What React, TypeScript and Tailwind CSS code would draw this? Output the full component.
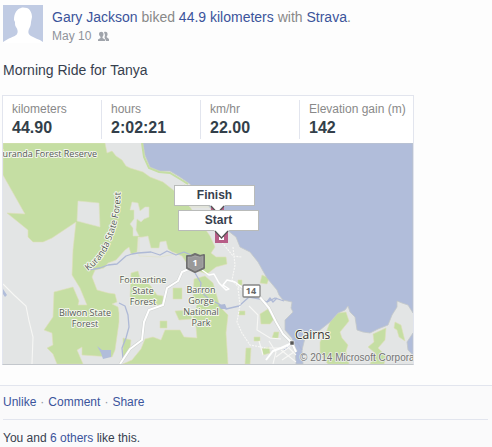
import React from "react";

const link = "text-[#3b549b] hover:underline";

const stats = [
  { label: "kilometers", value: "44.90" },
  { label: "hours", value: "2:02:21" },
  { label: "km/hr", value: "22.00" },
  { label: "Elevation gain (m)", value: "142" },
];

function Avatar() {
  return (
    <svg className="h-[38px] w-10 shrink-0 bg-[#c0cbe3]" viewBox="0 0 40 38" aria-label="Profile picture">
      <path
        d="M0 38V37L5 34C9 32 13 31 14 29C15 27 15 25 13 22C12 21 12 19 12 17L11 15C11 8 14 4 18 3C20 2 22 3 24 3C27 4 29 8 29 12L28 17C28 20 27 22 26 24C25 27 25 29 28 31C31 33 36 34 40 37V38Z"
        fill="#fff"
      />
    </svg>
  );
}

function FriendsIcon() {
  return (
    <svg className="h-[10px] w-[11px]" viewBox="0 0 11 10" fill="#a0a4ab" aria-label="Friends">
      <path d="M6 1C8 0 10 1 9.500 4L8.500 6L11 8V10H8L7 7.500L6.500 6.500L7 4Z" />
      <path d="M1 3C1 0 5.500 0 5.500 3C5.500 4.500 5 5 4.500 6V7L7 8.500V10H0V8.500L2.500 7V6C2 5 1 4.500 1 3Z" />
    </svg>
  );
}

function Label({ x, y, lines }: { x: number; y: number; lines: string[] }) {
  return (
    <>
      {lines.map((line, i) => (
        <text key={line} x={x} y={y + i * 11} textAnchor="middle">
          {line}
        </text>
      ))}
    </>
  );
}

function MapDrawing() {
  return (
    <svg className="block w-full" viewBox="3 143 410 221" role="img" aria-label="Route map near Cairns">
      <rect x="3" y="143" width="410" height="221" fill="#e3e5e5" />
      {/* Forest reserves */}
      <g fill="#c5dea3" stroke="#dfdfb8" strokeWidth="0.6" strokeLinejoin="round">
        <path d="M3 143H105L107 153L112 151L116 156L122 160L126 166L130 168L143 172L150 177L163 182L177 193L190 207L210 236L215 247L211 253L216 257L226 257L227 264L216 267L207 274L190 268L182 256L173 252L166 254L158 251L149 253L147 237L138 237L137 252L131 254L129 247L125 250L116 260L108 263L104 268L95 270L92 277L97 290L108 293L115 294L117 302L112 304L118 307L119 313L119 322L115 350L112 357L82 355L82 347L77 350L83 364H57L53 354L47 348L53 345L52 333L44 330L53 317L54 292L73 287L79 301L78 305L87 305L80 288L72 275L73 250L76 222L52 238L43 242L33 242L28 237V230L7 213L25 214L3 175Z" />
        <path d="M131 273L138 271L140 278L150 285L157 295L163 296V305H154L144 302L130 299Z" />
        <path d="M194 279L205 276L213 283L218 300L220 307L228 315L226 333L228 364H123L132 360L141 349L145 339L153 337L161 340L165 330L180 330L184 337L197 338L196 327L193 317L197 305L193 300Z" />
        <path d="M173 288H182V299H173Z M175 311L190 310L192 319L179 320Z M160 321H167V328H160Z M123 338L131 340L130 348L123 360Z" />
        <path d="M327 330L330 322L338 313L346 312L349 321L340 332L342 338L348 345L346 351L349 364H328L320 355L320 342Z" />
        <path d="M373 334L386 328L385 340L378 348L386 356L384 364H370L375 353L368 347L374 342Z M395 322L401 325L405 341L399 337L397 330L394 328Z" />
        <path d="M260 314L268 309L274 319L270 324H261Z M246 348H251L250 364H245Z M262 275L269 278L267 284L260 283Z M238 280H242V285H238Z M239 311H245V315H239Z M274 332H279L278 338H272Z M254 337H260V341H254Z M262 349L269 347L270 353L263 355Z" />
      </g>
      {/* Clearings */}
      <g fill="#e3e5e5" stroke="#dfe1c4" strokeWidth="0.6">
        <path d="M78 201L99 203L100 227L77 221Z" />
        <path d="M132 202L138 203L140 211L145 207H149V217L144 219L141 222L137 219L136 230L139 236L133 236V228L130 224L134 219V210H130Z" />
        <path d="M139 238L148 236L151 248L159 248L160 242L166 241L168 249L175 254L160 257L139 256Z" />
        <path d="M191 178L177 192L190 207L210 207L215 230L224 230L218 210Z" />
      </g>
      {/* Sea and inlets */}
      <g fill="#b1bdda" stroke="#c3c8c9" strokeWidth="0.8">
        <path d="M143 143L145 155L150 167L160 171L170 171L180 177L190 184L202 198L219 218L227 230L236 237L240 247L250 252L258 262L263 271L267 278L277 290L279 295L283 300L292 302L291 308L293 312L285 320V330L292 338L295 347L296 364H303L302 350L305 338L320 330L330 322L338 313L345 310L348 306L350 312L355 317L357 330L363 332L370 333L378 329L388 325L392 315L397 307V301L402 303L408 305L413 313V143Z" />
        <path d="M413 333L407 342L408 350L413 355Z" />
        <path d="M97 346L102 350L111 350V357L103 359L101 353Z M3 289L7 295L5 297L3 294Z" stroke="none" />
      </g>
      <path d="M142 143L144 157L149 168L159 172L170 173L180 179L188 184" fill="none" stroke="#c5dea3" strokeWidth="2" />
      {/* Creeks */}
      <g fill="none" stroke="#aeb9d6" strokeWidth="1.3" strokeLinejoin="round">
        <path d="M88 270L100 268L108 265L117 264L126 256L132 254L138 253L151 252L160 255L167 251L176 255L184 252L191 255" />
        <path d="M119 303L125 306L128 315L129 327L126 338L122 348L123 359" />
        <path d="M195 273L201 283L200 291L209 299L219 304L226 309L239 306L249 297L260 299L267 302L275 298L284 301" />
        <path d="M267 302L270 298L273 302L277 298" />
        <path d="M302 350L297 342L292 345L284 350" />
      </g>
      <path d="M218 305L225 304L227 309L221 309Z" fill="#aeb9d6" />
      {/* Minor roads */}
      <g fill="none" stroke="#f7f7f5" strokeWidth="1.1">
        <path d="M3 284L14 295L26 306L29 321L33 337L32 364" />
        <path d="M233 247L235 265L232 280L242 291M220 240L233 256L242 257M238 288L240 305L237 322L242 333L250 345L266 348" strokeDasharray="2 1" />
        <path d="M249 306L258 315L257 330L270 338L281 339M259 341L263 355M269 341L276 352L273 364M281 350L296 362M286 345L296 355M276 357L292 345M266 348L286 348M282 360L297 350" />
      </g>
      {/* Highways */}
      <g fill="none" stroke="#cfd2d0" strokeWidth="3" strokeLinejoin="round">
        <path d="M120 364L130 349L142 340L144 322L149 310L163 305L167 288L178 281L182 272L191 268" />
        <path d="M259 296L269 308L276 322L283 334L292 343L296 352" />
      </g>
      <g fill="none" stroke="#fff" strokeWidth="2" strokeLinejoin="round">
        <path d="M120 364L130 349L142 340L144 322L149 310L163 305L167 288L178 281L182 272L191 268" />
        <path d="M202 270L209 275L214 274L219 283L226 290L229 289L223 285L227 280L235 282L243 288" strokeWidth="1.500" />
        <path d="M259 296L269 308L276 322L283 334L292 343L296 352M292 343L281 348L273 351L266 360" />
      </g>
      {/* Route shields */}
      <path d="M187 256L191 256L195 254L200 256L204 255V268L195 272L187 268Z" fill="#999" stroke="#707070" strokeWidth="2" strokeLinejoin="round" />
      <path d="M188 257L191 257L195 256L200 257L203 256V267L195 271L188 267Z" fill="none" stroke="#b5b5b5" strokeWidth="0.5" />
      <rect x="243" y="285" width="17" height="12" rx="1" fill="#fff" stroke="#858585" strokeWidth="1.300" />
      <g fontFamily="'Open Sans', 'Noto Sans', sans-serif" fontWeight="700" fontSize="9" textAnchor="middle">
        <text x="195" y="266" fill="#fff">1</text>
        <text x="251" y="294" fill="#666">14</text>
      </g>
      {/* Place names */}
      <path id="ridge" d="M88 271C100 262 107 252 112 238S121 211 121 180" fill="none" />
      <g
        fontFamily="'Open Sans', 'Noto Sans', sans-serif"
        fontWeight="500"
        fontSize="9"
        fill="#555a55"
        stroke="#f3f6ec"
        strokeWidth="2"
        strokeLinejoin="round"
        paintOrder="stroke"
      >
        <text x="97" y="157" textAnchor="end">Kuranda Forest Reserve</text>
        <text>
          <textPath href="#ridge">Kuranda State Forest</textPath>
        </text>
        <Label x={143} y={283} lines={["Formartine", "State", "Forest"]} />
        <Label x={201} y={293} lines={["Barron", "Gorge", "National", "Park"]} />
        <Label x={85} y={316} lines={["Bilwon State", "Forest"]} />
        <text x="295" y="339" fontSize="12" fontWeight="400" fill="#333">Cairns</text>
      </g>
      <rect x="290" y="341" width="4" height="4" fill="#555" stroke="#fff" strokeWidth="0.5" />
      <text
        x="300"
        y="361"
        fontFamily="'Liberation Sans', Arial, sans-serif"
        fontSize="10"
        fill="#747474"
        stroke="#eceeed"
        strokeWidth="1.500"
        paintOrder="stroke"
      >
        © 2014 Microsoft Corporati
      </text>
    </svg>
  );
}

function Pin({ label, place }: { label: string; place: string }) {
  return (
    <div className={`absolute ${place} w-[81px]`}>
      <div className="h-[21px] border border-[#b9bbb9] bg-white text-center text-xs leading-[19px] font-bold text-[#37404e]">
        {label}
      </div>
      <svg className="-mt-px ml-9 block" width="15" height="13" viewBox="0 0 15 13">
        <path d="M1 1H14V13H1Z" fill="#b75d87" />
        <path d="M5 7H10V10H5Z" fill="#fff" />
        <path d="M0 0H15L7.500 8Z" fill="#fff" />
        <path d="M1 1L7.500 8L14 1" fill="none" stroke="#555" strokeWidth="1.200" />
      </svg>
    </div>
  );
}

export default function App() {
  return (
    <article className="min-h-screen bg-[#fafafb] font-['Liberation_Sans',Arial,sans-serif] text-xs text-[#37404e]">
      <div className="bg-[#fdfdfd] pt-[5px] pb-5">
        <header className="flex gap-[9px] px-[3px]">
          <Avatar />
          <div className="pt-1">
            <h1 className="text-sm leading-4 text-[#898989]">
              <a href="#" className={link}>Gary Jackson</a> biked <a href="#" className={link}>44.9 kilometers</a> with{" "}
              <a href="#" className={link}>Strava</a>.
            </h1>
            <div className="mt-1 flex items-center gap-[7px] leading-[14px] text-[#8f939b]">
              <time>May 10</time>
              <FriendsIcon />
            </div>
          </div>
        </header>

        <p className="mt-[18px] px-[3px] text-sm leading-[18px]">Morning Ride for Tanya</p>

        <section className="mt-4 ml-[2px] max-w-[412px] border border-b-[#c3c7cc] border-[#e2e5ee] bg-white">
          <dl className="grid grid-cols-[98px_99px_99px_1fr] py-1">
            {stats.map((s) => (
              <div key={s.label} className="h-[39px] border-l border-[#e2e5ee] pl-[9px] first:border-l-0">
                <dt className="pt-px leading-4 whitespace-nowrap text-[#898989]">{s.label}</dt>
                <dd className="pt-px text-base leading-5 font-bold text-[#333f4a]">{s.value}</dd>
              </div>
            ))}
          </dl>
          <div className="relative overflow-hidden">
            <MapDrawing />
            <Pin label="Finish" place="left-[171px] top-[42px]" />
            <Pin label="Start" place="left-[175px] top-[67px]" />
          </div>
        </section>
      </div>

      <footer className="border-t border-[#e2e5ee] pr-1 pl-[3px]">
        <div className="flex h-[33px] items-center gap-1 pb-[2px] text-[#8f939b]">
          <button className={link}>Unlike</button>·<button className={link}>Comment</button>·
          <button className={link}>Share</button>
        </div>
        <p className="border-t border-[#e2e5ee] pt-[10px] leading-4">
          You and <a href="#" className={link}>6 others</a> like this.
        </p>
      </footer>
    </article>
  );
}
